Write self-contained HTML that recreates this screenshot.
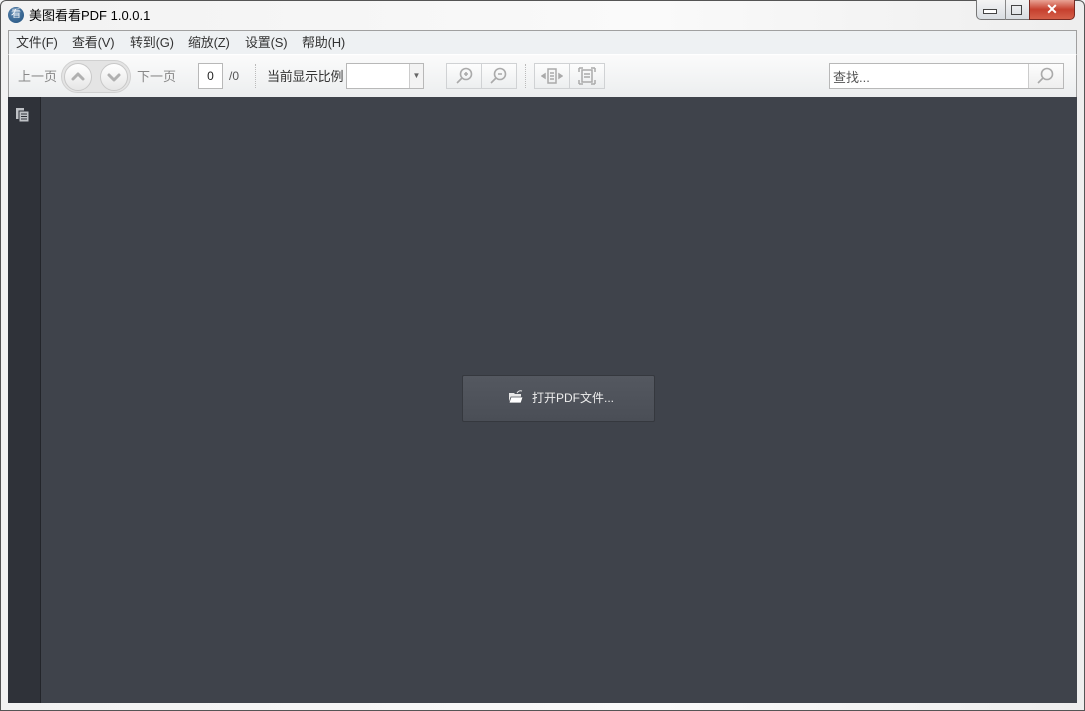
<!DOCTYPE html>
<html><head><meta charset="utf-8"><style>
*{margin:0;padding:0;box-sizing:border-box}
body{width:1085px;height:711px;overflow:hidden;background:#f4f5f6;font-family:"Liberation Sans","Noto Sans CJK SC",sans-serif;font-size:13px;color:#333;position:relative}
.frame{position:absolute;left:0;top:0;width:1085px;height:711px;border:1px solid #555;border-radius:6px 6px 0 0;background:linear-gradient(90deg,#f2f2f2,#fafafa 60%,#eee)}
.abs{position:absolute}
.menu{left:8px;top:30px;width:1069px;height:24px;background:#eef1f3;border-top:1px solid #a0a0a0;border-left:1px solid #a0a0a0;border-right:1px solid #a0a0a0}
.menu span{position:absolute;top:1px;font-size:13px;color:#333;letter-spacing:-0.2px}
.tb{left:8px;top:54px;width:1069px;height:43px;background:linear-gradient(#fbfbfb,#eceeef);border-top:1px solid #fff;border-left:1px solid #a0a0a0;border-right:1px solid #a0a0a0}
.gray{color:#888;font-size:13px}
.btn{background:linear-gradient(#fdfdfd,#eceeef);border:1px solid #d0d2d4}
.side{left:8px;top:97px;width:33px;height:606px;background:#2f3239;border-right:1px solid #23252a}
.main{left:41px;top:97px;width:1036px;height:606px;background:#3f434b}
.open{left:462px;top:375px;width:193px;height:47px;background:linear-gradient(#545860,#4a4e56);border:1px solid #35383e;border-radius:2px}
</style></head><body>
<div class="frame"></div>
<div class="abs" style="left:8px;top:7px;width:16px;height:16px;border-radius:50%;background:radial-gradient(circle at 40% 35%,#5b86b0,#1f4f7c);color:#fff;font-size:10px;text-align:center;line-height:16px">看</div>
<div class="abs" style="left:29px;top:5px;font-size:13px;color:#000">美图看看PDF 1.0.0.1</div>
<div class="abs" style="left:976px;top:0;width:82px;height:20px;border:1px solid #777;border-top:none;border-radius:0 0 5px 5px;background:linear-gradient(#f4f4f4,#d9dde2)"></div>
<div class="abs" style="left:983px;top:9px;width:14px;height:5px;border:1px solid #444;background:#fff"></div>
<div class="abs" style="left:1005px;top:0;width:1px;height:20px;background:#888"></div>
<div class="abs" style="left:1011px;top:5px;width:11px;height:10px;border:1px solid #444"></div>
<div class="abs" style="left:1029px;top:0;width:46px;height:20px;border:1px solid #7a2a22;border-top:none;border-radius:0 0 5px 0;background:linear-gradient(#e9a395,#c6402e 50%,#d5604a);color:#fff;text-align:center;font-size:14px;font-weight:bold;line-height:18px">✕</div>
<div class="abs menu">
<span style="left:7px">文件(F)</span><span style="left:63px">查看(V)</span><span style="left:121px">转到(G)</span><span style="left:179px">缩放(Z)</span><span style="left:236px">设置(S)</span><span style="left:293px">帮助(H)</span>
</div>
<div class="abs tb"></div>
<div class="abs gray" style="left:18px;top:66px">上一页</div>
<div class="abs" style="left:61px;top:60px;width:70px;height:33px;border-radius:17px;background:#e4e4e4;border:1px solid #d0d0d0"></div>
<div class="abs" style="left:64px;top:63px;width:28px;height:28px;border-radius:50%;background:linear-gradient(#fff,#e6e6e6);border:1px solid #c8c8c8"></div>
<svg class="abs" style="left:64px;top:63px" width="28" height="28" fill="none" stroke="#b0b0b0" stroke-width="3" stroke-linecap="round" stroke-linejoin="round"><path d="M9 16l5-5 5 5"/></svg>
<div class="abs" style="left:100px;top:63px;width:28px;height:28px;border-radius:50%;background:linear-gradient(#fff,#e6e6e6);border:1px solid #c8c8c8"></div>
<svg class="abs" style="left:100px;top:63px" width="28" height="28" fill="none" stroke="#b0b0b0" stroke-width="3" stroke-linecap="round" stroke-linejoin="round"><path d="M9 12l5 5 5-5"/></svg>
<div class="abs gray" style="left:137px;top:66px">下一页</div>
<div class="abs" style="left:198px;top:63px;width:25px;height:26px;background:#fff;border:1px solid #b8b8b8;text-align:center;line-height:24px;font-size:12px;color:#222">0</div>
<div class="abs" style="left:229px;top:69px;font-size:12px;color:#555">/0</div>
<div class="abs" style="left:255px;top:64px;height:24px;border-left:1px dotted #bbb"></div>
<div class="abs" style="left:267px;top:66px;color:#333;letter-spacing:-0.3px">当前显示比例</div>
<div class="abs" style="left:346px;top:63px;width:78px;height:26px;background:#fff;border:1px solid #b8b8b8"></div>
<div class="abs" style="left:409px;top:64px;width:14px;height:24px;border-left:1px solid #ccc;background:#f3f3f3;color:#666;font-size:8px;text-align:center;line-height:24px">▼</div>
<div class="abs btn" style="left:446px;top:63px;width:71px;height:26px"></div>
<div class="abs" style="left:481px;top:64px;width:1px;height:24px;background:#d0d2d4"></div>
<svg class="abs" style="left:455px;top:66px" width="20" height="20" fill="none" stroke="#aaa" stroke-width="1.6"><circle cx="11" cy="8" r="5.5"/><path d="M7 12l-5 5M9 8h4M11 6v4"/></svg>
<svg class="abs" style="left:489px;top:66px" width="20" height="20" fill="none" stroke="#aaa" stroke-width="1.6"><circle cx="11" cy="8" r="5.5"/><path d="M7 12l-5 5M9 8h4"/></svg>
<div class="abs" style="left:525px;top:64px;height:24px;border-left:1px dotted #bbb"></div>
<div class="abs btn" style="left:534px;top:63px;width:71px;height:26px"></div>
<div class="abs" style="left:569px;top:64px;width:1px;height:24px;background:#d0d2d4"></div>
<svg class="abs" style="left:541px;top:66px" width="22" height="20" fill="none" stroke="#aaa" stroke-width="1.5"><rect x="7" y="3" width="8" height="14"/><path d="M9 7h4M9 10h4M9 13h4"/><path d="M4 8l-3 2 3 2z M18 8l3 2-3 2z" fill="#aaa"/></svg>
<svg class="abs" style="left:577px;top:66px" width="20" height="20" fill="none" stroke="#aaa" stroke-width="1.5"><rect x="5" y="4" width="10" height="12"/><path d="M7 8h6M7 11h6M2 2h4M2 2v4M18 2h-4M18 2v4M2 18h4M2 18v-4M18 18h-4M18 18v-4"/></svg>
<div class="abs" style="left:829px;top:63px;width:235px;height:26px;background:#fff;border:1px solid #b8b8b8"></div>
<div class="abs" style="left:833px;top:67px;color:#555">查找...</div>
<div class="abs" style="left:1028px;top:64px;width:35px;height:24px;border-left:1px solid #ccc;background:linear-gradient(#fdfdfd,#eee)"></div>
<svg class="abs" style="left:1036px;top:66px" width="20" height="20" fill="none" stroke="#aaa" stroke-width="1.6"><circle cx="11" cy="8" r="5.5"/><path d="M7 12l-5 5"/></svg>
<div class="abs side"></div>
<svg class="abs" style="left:15px;top:107px" width="16" height="16" fill="#bfc2c6"><rect x="1" y="1" width="8" height="11"/><rect x="4" y="4" width="10" height="11" stroke="#2f3239" stroke-width="1"/><path d="M6 7h6M6 9.5h6M6 12h6" stroke="#2f3239" stroke-width="1"/></svg>
<div class="abs main"></div>
<div class="abs open"></div>
<svg class="abs" style="left:508px;top:390px" width="16" height="14"><path d="M1 3h5l1 1h6v9H1z" fill="#e8e8e8"/><path d="M3 7h12l-2 6H1z" fill="#fff" stroke="#4a4e56" stroke-width=".8"/><path d="M9 3q2-3 5-2" stroke="#e8e8e8" fill="none"/></svg>
<div class="abs" style="left:532px;top:389px;color:#eee;font-size:12px">打开PDF文件...</div>
</body></html>
